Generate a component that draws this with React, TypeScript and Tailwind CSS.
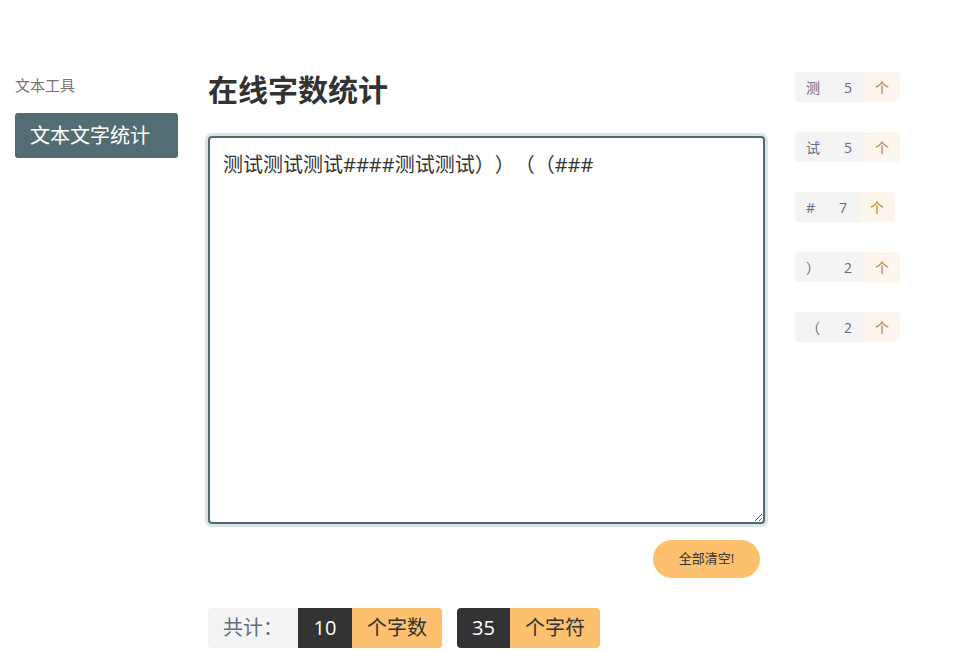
import React from "react";

const stats = [
  { ch: "测", n: 5 },
  { ch: "试", n: 5 },
  { ch: "#", n: 7 },
  { ch: "）", n: 2 },
  { ch: "（", n: 2 },
];

export default function App() {
  return (
    <div
      className="min-h-[652px] w-[958px] bg-white [text-spacing-trim:space-all]"
      style={{ fontFamily: '"Open Sans", "Noto Sans CJK SC", sans-serif' }}
    >
      <div className="flex pl-[15px] pt-[70px]">
        <aside className="w-[163px] shrink-0">
          <div className="mt-[5px] text-[15px] leading-[20px] text-[#7a7070]">文本工具</div>
          <div className="mt-[18px] flex h-[45px] items-center rounded-[3px] bg-[#536d72] pl-[15px] text-[20px] text-white">
            文本文字统计
          </div>
        </aside>
        <main className="ml-[30px] w-[557px] shrink-0">
          <h1 className="text-[30px] font-bold leading-[40px] text-[#333]">在线字数统计</h1>
          <textarea
            className="mt-[26px] block h-[388px] w-[557px] resize rounded-[4px] border-2 border-[#4f6b70] px-[13px] pt-[12px] text-[20px] leading-[30px] text-[#333] shadow-[0_0_0_3px_#dce3e5] outline-none [text-spacing-trim:space-all]"
            defaultValue="测试测试测试####测试测试））（（###"
          />
          <div className="mt-[16px] flex justify-end pr-[5px]">
            <button className="h-[38px] w-[107px] rounded-full bg-[#fdc06f] text-[13px] text-[#333]">
              全部清空!
            </button>
          </div>
          <div className="mt-[30px] flex h-[40px] text-[20px]">
            <div className="flex w-[90px] items-center rounded-l-[4px] bg-[#f4f4f5] pl-[15px] text-[#5e6d82]">共计：</div>
            <div className="flex w-[54px] items-center justify-center bg-[#333] text-white">10</div>
            <div className="flex w-[90px] items-center justify-center rounded-r-[4px] bg-[#fdc06f] text-[#333]">个字数</div>
            <div className="ml-[15px] flex w-[53px] items-center justify-center rounded-l-[4px] bg-[#333] text-white">35</div>
            <div className="flex w-[90px] items-center justify-center rounded-r-[4px] bg-[#fdc06f] text-[#333]">个字符</div>
          </div>
        </main>
        <div className="ml-[30px] flex flex-col gap-[30px] pt-[2px]">
          {stats.map((s, i) => (
            <div key={i} className="flex h-[30px] w-fit overflow-hidden rounded-[4px] text-[14px]">
              <div className="flex items-center bg-[#f4f4f5] pl-[11px] pr-[12px] text-[#5e6d82]">
                <span className={s.ch === "#" ? "w-[9px]" : "w-[14px]"}>{s.ch}</span>
                <span className="ml-[24px]">{s.n}</span>
              </div>
              <div className="flex items-center bg-[#fdf6ec] px-[11px] text-[#b87d1e]">个</div>
            </div>
          ))}
        </div>
      </div>
    </div>
  );
}
